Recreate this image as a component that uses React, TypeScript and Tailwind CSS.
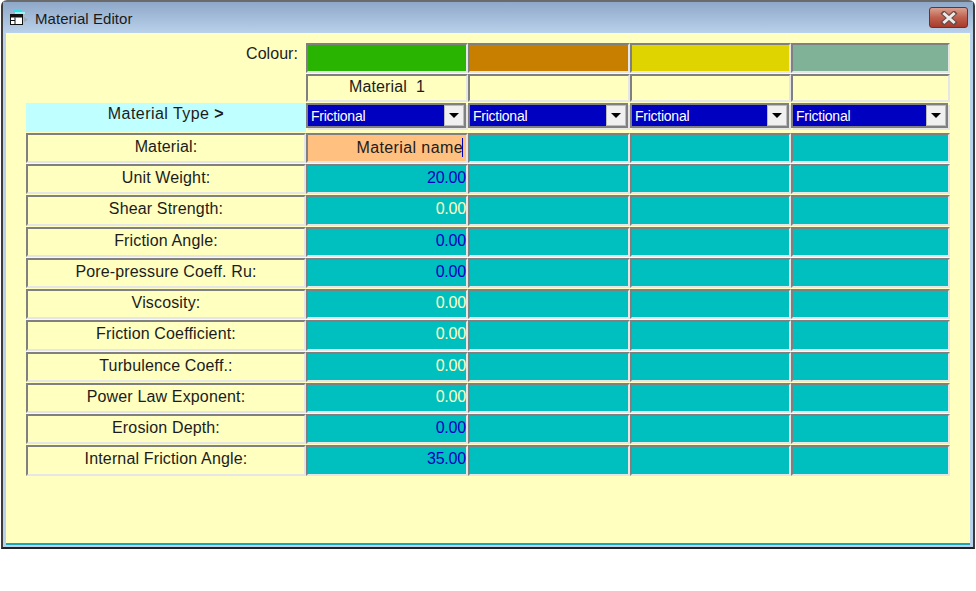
const FONT = 'font-["Liberation_Sans",Arial,sans-serif]'
const CELL = 'border-2 border-t-[#808080] border-l-[#808080] border-b-[#e6e6e6] border-r-[#e6e6e6]'
const LABEL = 'text-center text-[16px] leading-[23px] tracking-[0.15px] text-[#1c1c1c]'

const swatches = ['bg-[#28b400]', 'bg-[#c87f00]', 'bg-[#e0d400]', 'bg-[#80b298]']

const rows = [
  { label: 'Unit Weight:', value: '20.00', color: 'text-[#0000c0]' },
  { label: 'Shear Strength:', value: '0.00', color: 'text-[#ffffc0]' },
  { label: 'Friction Angle:', value: '0.00', color: 'text-[#0000c0]' },
  { label: 'Pore-pressure Coeff. Ru:', value: '0.00', color: 'text-[#0000c0]' },
  { label: 'Viscosity:', value: '0.00', color: 'text-[#ffffc0]' },
  { label: 'Friction Coefficient:', value: '0.00', color: 'text-[#ffffc0]' },
  { label: 'Turbulence Coeff.:', value: '0.00', color: 'text-[#ffffc0]' },
  { label: 'Power Law Exponent:', value: '0.00', color: 'text-[#ffffc0]' },
  { label: 'Erosion Depth:', value: '0.00', color: 'text-[#0000c0]' },
  { label: 'Internal Friction Angle:', value: '35.00', color: 'text-[#0000c0]' },
]

function WindowIcon() {
  return (
    <svg width="20" height="16" viewBox="0 0 20 16" className="shrink-0">
      <rect x="4" y="0" width="9" height="2" fill="#2fe0e6" />
      <rect x="6" y="2" width="10" height="2" fill="#9ff0f2" />
      <rect x="1.500" y="4.500" width="12" height="10" fill="#fff" stroke="#111" />
      <rect x="1.500" y="4.500" width="12" height="3" fill="#111" />
      <path d="M6 7.500v7M2 10.500h4" stroke="#111" />
      <path d="M15 7l4 2.500-4 2.500z" fill="#a2a8b2" />
    </svg>
  )
}

function CloseGlyph() {
  return (
    <svg width="18" height="14" viewBox="0 0 18 14">
      <path d="M4 2.500l10 9M14 2.500l-10 9" stroke="#6b4a44" strokeWidth="5" strokeLinecap="square" />
      <path d="M4.500 3l9 8M13.500 3l-9 8" stroke="#ececec" strokeWidth="3" strokeLinecap="square" />
    </svg>
  )
}

function TypeSelect() {
  return (
    <div className="mr-[2px] flex h-[25px] self-start border-2 border-[#808080] bg-[#0000c0] shadow-[2px_2px_0_#e6e6e6]">
      <span className="flex-1 pl-[3px] text-[14px] leading-[23px] tracking-[-0.25px] text-white">Frictional</span>
      <span className="flex w-[20px] items-center justify-center border border-[#bcbcbc] bg-[#f0f0f0]">
        <span className="border-x-[5px] border-t-[5px] border-x-transparent border-t-black" />
      </span>
    </div>
  )
}

function DataRow({ label, value, color }: { label: string; value: string; color: string }) {
  return (
    <>
      <div className={`h-[30.27px] ${LABEL} ${CELL}`}>{label}</div>
      <div className={`h-[30.27px] bg-[#00bfbf] text-right text-[16px] leading-[24px] tracking-[-0.2px] ${color} ${CELL}`}>{value}</div>
      <div className={`h-[30.27px] bg-[#00bfbf] ${CELL}`} />
      <div className={`h-[30.27px] bg-[#00bfbf] ${CELL}`} />
      <div className={`h-[30.27px] bg-[#00bfbf] ${CELL}`} />
    </>
  )
}

export default function App() {
  return (
    <div className={`h-[591px] w-[976px] overflow-hidden bg-white pl-[1px] ${FONT}`}>
      <div className="flex h-[549px] w-[974px] flex-col rounded-t-[6px] border-2 border-[#3c3c3c] border-t-[#6a6a6a] border-b-[#222] bg-[#b9d1ea] px-[3px] pb-[2px]">
        <div className="mx-[-3px] flex h-[31px] shrink-0 items-center bg-gradient-to-b from-[#8fa8c8] to-[#b9d1ea] px-[3px] pt-[3px]">
          <div className="ml-[3px] mr-[6px] mt-[-2px]">
            <WindowIcon />
          </div>
          <span className="text-[15px] tracking-[0.05px] text-[#1a1a1a]">Material Editor</span>
          <button
            type="button"
            className="ml-auto mb-[3px] mr-[2px] flex h-[21px] w-[39px] items-center justify-center rounded-[3px] border border-[#6e3030] bg-gradient-to-b from-[#d9a090] via-[#c0604e] to-[#a83a28]"
          >
            <CloseGlyph />
          </button>
        </div>

        <div className="flex-1 border-b-2 border-[#1fa3b8] bg-[#ffffc0] pl-[20px] pt-[10px]">
          <div className="grid w-[924px] grid-cols-[280px_162px_162px_161px_159px] gap-y-[1px]">
            <div className="pr-[8px] text-right text-[16px] leading-[22px] tracking-[0.05px] text-[#1c1c1c]">Colour:</div>
            {swatches.map(c => (
              <div key={c} className={`h-[30px] ${c} ${CELL}`} />
            ))}

            <div />
            <div className={`h-[28px] text-center text-[16px] leading-[21px] tracking-[0.1px] text-[#1c1c1c] ${CELL}`}>Material&nbsp; 1</div>
            <div className={`h-[28px] ${CELL}`} />
            <div className={`h-[28px] ${CELL}`} />
            <div className={`h-[28px] ${CELL}`} />

            <div className="h-[29px] bg-[#c0ffff] text-center text-[16px] leading-[22px] tracking-[0.45px] text-[#1c1c1c]">
              Material Type <b className="font-bold">&gt;</b>
            </div>
            <TypeSelect />
            <TypeSelect />
            <TypeSelect />
            <TypeSelect />

            <div className={`h-[30px] ${LABEL} ${CELL}`}>Material:</div>
            <div className={`relative h-[30px] bg-[#ffc080] pr-[3px] text-right text-[16px] leading-[25px] tracking-[0.4px] text-[#1c1c1c] ${CELL}`}>
              Material name
              <span className="absolute right-[3px] top-[3px] h-[19px] w-[1px] bg-[#0000c0]" />
            </div>
            <div className={`h-[30px] bg-[#00bfbf] ${CELL}`} />
            <div className={`h-[30px] bg-[#00bfbf] ${CELL}`} />
            <div className={`h-[30px] bg-[#00bfbf] ${CELL}`} />

            {rows.map(r => (
              <DataRow key={r.label} {...r} />
            ))}
          </div>
        </div>
      </div>
    </div>
  )
}
